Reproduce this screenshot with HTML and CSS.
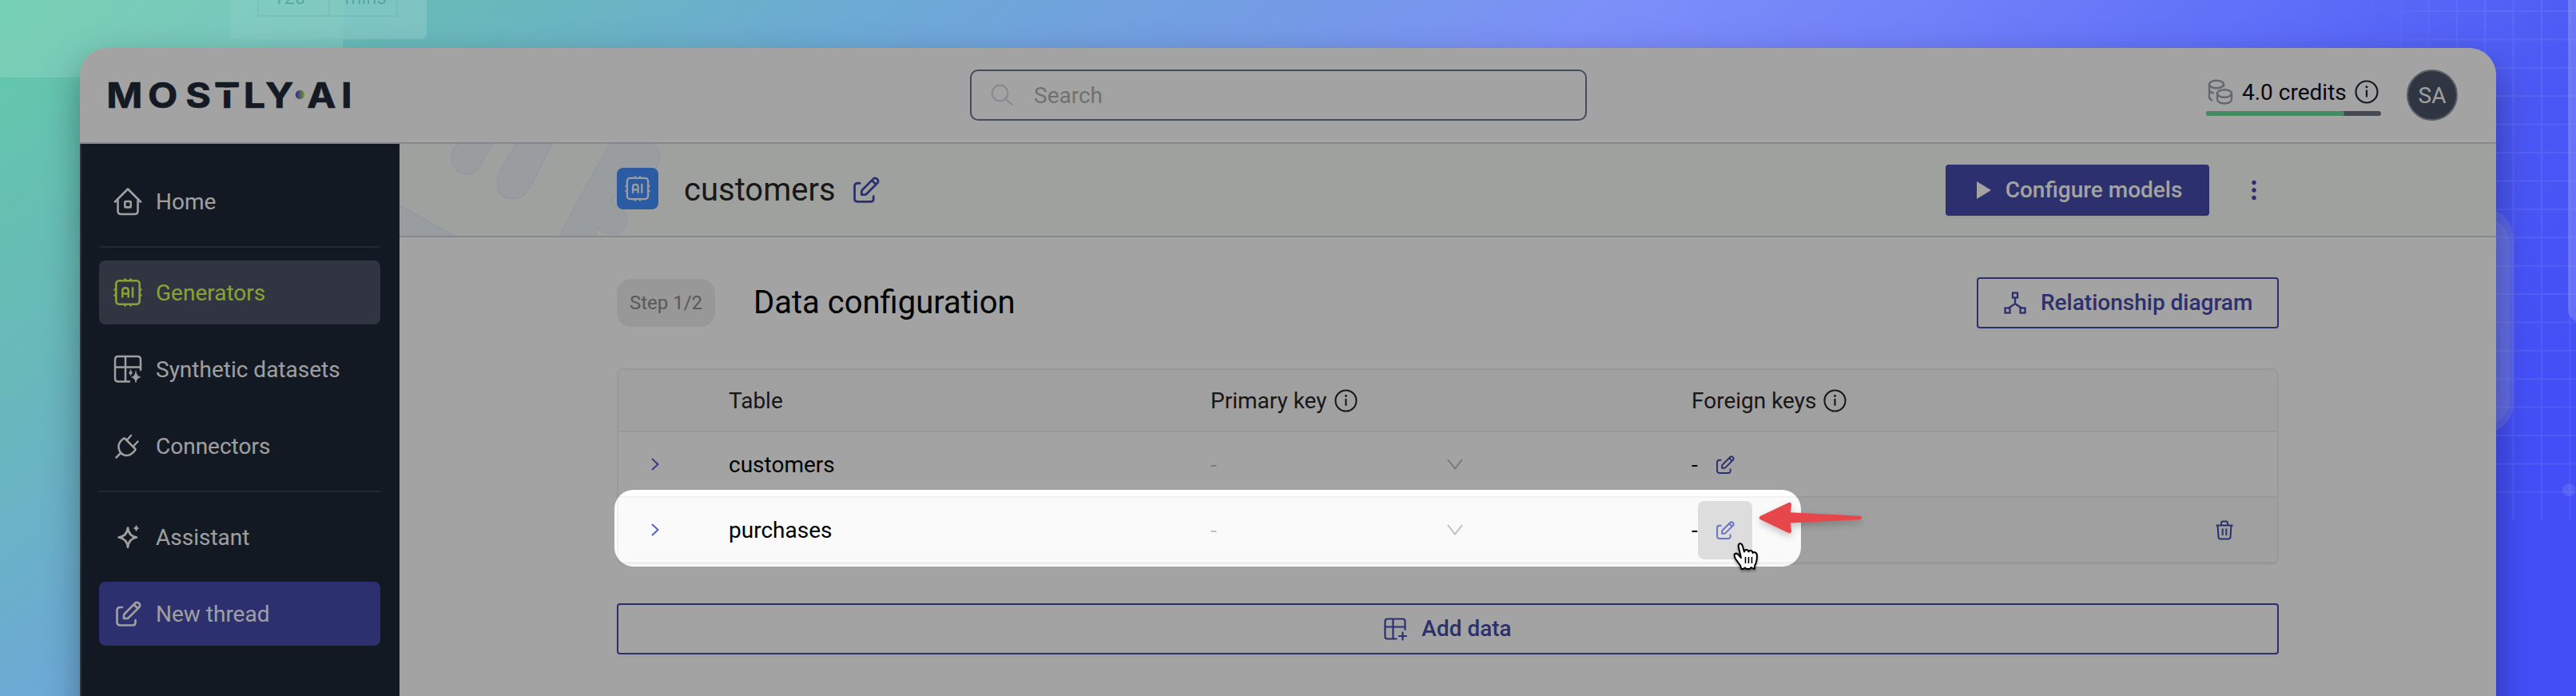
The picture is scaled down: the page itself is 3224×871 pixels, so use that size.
FILE: index.html
```html
<!DOCTYPE html>
<html lang="en">
<head>
<meta charset="utf-8">
<title>MOSTLY AI – Data configuration</title>
<link rel="stylesheet" href="styles.css">
</head>
<body>
<svg class="defs" width="0" height="0" aria-hidden="true">
  <symbol id="i-edit" viewBox="0 0 32 32"><g fill="none" stroke="currentColor" stroke-width="2.7" stroke-linecap="round" stroke-linejoin="round"><path d="M8 8H5.500Q1.500 8 1.500 12V26.500Q1.500 30.500 5.500 30.500H21Q24.500 30.500 24.500 27V24"/><path d="M11 16 24.200 2.800Q26.500 .8 29 3Q31.200 5.500 29.200 7.800L16 21Q15 22 13.500 22H10V18.500Q10 17 11 16ZM22.500 4.500 27.500 9.500"/></g></symbol>
  <symbol id="i-chip" viewBox="0 0 36 36"><g fill="none" stroke="currentColor" stroke-width="2.600" stroke-linecap="round" stroke-linejoin="round"><rect x="3.300" y="3.300" width="29.400" height="29.400" rx="4"/><path d="M14.500 3V1.500M21.500 3V1.500M14.500 33V34.500M21.500 33V34.500M3 14.500H1.500M3 21.500H1.500M33 14.500H34.500M33 21.500H34.500M11.300 23.500V16Q11.300 12.300 15 12.300T18.700 16V23.500M11.300 19.500H18.700M24 12.300V23.500"/></g></symbol>
  <symbol id="i-info" viewBox="0 0 30 30"><circle cx="15" cy="15" r="13.500" fill="none" stroke="currentColor" stroke-width="2.200"/><path d="M15 12.500V21.500" stroke="currentColor" stroke-width="2.200"/><circle cx="15" cy="8.800" r="1.500" fill="currentColor"/></symbol>
  <symbol id="i-right" viewBox="0 0 10 16"><path d="M1 1 8.500 8 1 15" fill="none" stroke="currentColor" stroke-width="2"/></symbol>
  <symbol id="i-down" viewBox="0 0 20 14"><path d="M1 1 10 12.500 19 1" fill="none" stroke="currentColor" stroke-width="2"/></symbol>
</svg>
<div class="stage">
  <svg class="backdrop" width="3224" height="871" viewBox="0 0 3224 871" aria-hidden="true">
    <defs>
      <pattern id="grid" width="35.400" height="35.400" patternUnits="userSpaceOnUse" x="3003" y="13"><path d="M0 1H35.400M1 0V35.400" stroke="#fff" stroke-width="2"/></pattern>
      <linearGradient id="mg"><stop offset="0" stop-color="#000"/><stop offset=".6" stop-color="#fff" /></linearGradient>
      <mask id="gm"><rect x="2940" y="0" width="284" height="650" fill="url(#mg)"/></mask>
    </defs>
    <path d="M0 0H429V97H0Z" fill="#fff" opacity=".13"/>
    <path d="M288 0H534V41Q534 49 526 49H296Q288 49 288 41Z" fill="#fff" opacity=".06"/>
    <path d="M429 0H534V41Q534 49 526 49H429Z" fill="#fff" opacity=".1"/>
    <path d="M323 0V20H497V0M412 0V20" fill="none" stroke="#4a9a9c" stroke-width="1.500" opacity=".22"/>
    <rect x="2940" y="0" width="284" height="650" fill="url(#grid)" opacity=".07" mask="url(#gm)"/>
    <circle cx="3215" cy="613" r="8" fill="#fff" opacity=".1"/>
    <path d="M3214 0H3224V402Q3214 398 3214 386Z" fill="#aab4ff" opacity=".32"/>
    <path d="M3100 260Q3146 260 3146 305V500Q3146 542 3100 542Z" fill="#8f97c8" opacity=".25"/>
    <path d="M3100 268Q3141 275 3141 305V500Q3141 530 3100 536Z" fill="#aab0d8" opacity=".15"/>
  </svg>
  <div class="ghost"><span>120</span><span>mins</span></div>

  <div class="window">
    <header class="topbar">
      <svg class="logo" width="304" height="40" viewBox="0 0 304 40">
        <defs><linearGradient id="dot"><stop offset="0" stop-color="#4a3fe0"/><stop offset="1" stop-color="#b0ee50"/></linearGradient></defs>
        <g transform="scale(1.1 1)"><text class="logo-text" y="36" x="-2.600 44.500 87.600 120.100 153.400 178.300 225.600 264.500">MOSTLYAI</text></g>
        <rect x="134.200" y="7" width="28" height="3.600" fill="#1f2937"/>
        <rect x="132" y="10.600" width="32" height="3.300" fill="#fff"/>
        <circle cx="239.500" cy="19.500" r="5.700" fill="url(#dot)"/>
      </svg>
      <div class="search">
        <svg width="28" height="28" viewBox="0 0 28 28" fill="none" stroke="#d5d7e2" stroke-width="2.200" stroke-linecap="round"><circle cx="11.500" cy="11.500" r="9.800"/><path d="M18.500 18.500 26.500 26"/></svg>
        <span>Search</span>
      </div>
      <div class="account">
        <div class="credits">
          <div class="credits-row">
            <svg width="32" height="32" viewBox="0 0 32 32" fill="none" stroke="#9ca3af" stroke-width="2.400"><ellipse cx="11" cy="6.500" rx="9" ry="4.800"/><path d="M2 6.500V22Q2 25 6 27M2 14Q3 17 8 17.500M20 6.500V10"/><ellipse cx="21" cy="18" rx="9" ry="4.800"/><path d="M12 18V25.500Q13 30.500 21 30.500T30 25.500V18"/></svg>
            <span class="credits-label">4.0 credits</span>
            <svg class="ink" width="30" height="30"><use href="#i-info"/></svg>
          </div>
          <div class="meter"><div class="meter-fill"></div></div>
        </div>
        <div class="avatar">SA</div>
      </div>
    </header>

    <div class="body">
      <nav class="sidebar">
        <a class="item"><svg width="36" height="36" viewBox="0 0 36 36" fill="none" stroke="currentColor" stroke-width="2.600" stroke-linecap="round" stroke-linejoin="round"><path d="M2 18.500 18 2.500 34 18.500M5.500 17V30Q5.500 34 9.500 34H26.500Q30.500 34 30.500 30V17"/><rect x="14.300" y="18" width="7.400" height="7.400" rx="1"/></svg><span>Home</span></a>
        <hr>
        <a class="item active"><svg width="36" height="36"><use href="#i-chip"/></svg><span>Generators</span></a>
        <a class="item"><svg width="36" height="36" viewBox="0 0 36 36" fill="none" stroke="currentColor" stroke-width="2.500" stroke-linecap="round"><path d="M20 33.500H6Q2 33.500 2 29.500V6Q2 2 6 2H30Q34 2 34 6V19M15 2V33M2 15.500H34"/><path d="M28 20.500Q28.800 27 34 28Q28.800 29 28 35Q27.200 29 22.500 28Q27.200 27 28 20.500ZM21.500 18.500Q22 22 24 22.500Q22 23 21.500 26Q21 23 19 22.500Q21 22 21.500 18.500Z" fill="currentColor" stroke-width=".6"/></svg><span>Synthetic datasets</span></a>
        <a class="item"><svg width="36" height="36" viewBox="0 0 36 36" fill="none" stroke="currentColor" stroke-width="2.500" stroke-linecap="round" stroke-linejoin="round"><path d="M14 8.500 27 21.500Q28 22.500 27 23.500Q22 30.500 15 30Q12 29.500 9.500 27Q6 23 6.500 17Q8 12 13 8.500ZM9.500 26.500 3.500 32.500M17 10.500 22 5M25 18.500 30.500 12.500"/></svg><span>Connectors</span></a>
        <hr>
        <a class="item"><svg width="36" height="36" viewBox="0 0 36 36" fill="none" stroke="currentColor" stroke-width="2.700" stroke-linejoin="round"><path d="M18 6.500Q19 17 29 18.500Q19 20 18 31Q17 20 6.500 18.500Q17 17 18 6.500Z"/><path d="M28.500 3.500Q29 6.500 31.500 7Q29 7.500 28.500 10.500Q28 7.500 25.500 7Q28 6.500 28.500 3.500Z" fill="currentColor" stroke-width="1"/></svg><span>Assistant</span></a>
        <a class="item primary"><svg class="pen" width="32" height="32"><use href="#i-edit"/></svg><span>New thread</span></a>
      </nav>

      <main class="main">
        <div class="titlebar">
          <svg class="pattern" width="340" height="115" viewBox="0 0 340 115"><g fill="#eff6fb" stroke="#e6f1f9" stroke-width="2"><path d="M75-2Q64 8 65 21Q70 38 86 38Q97 38 102 24L118-2Z"/><path d="M147-2 124 38Q117 68 142 68.500Q156 68 163 54L192-2Z"/><path d="M-2 76 70 116H-2Z"/><path d="M264-2H314Q328 8 325 22Q320 38 300 50L268 66Q264 72 270 76Q286 84 284 98Q281 112 266 112Q254 111 249 105L243 117H199Z"/></g></svg>
          <div class="titlebar-inner">
            <div class="badge"><svg width="32" height="32"><use href="#i-chip"/></svg></div>
            <h1>customers</h1>
            <svg class="accent" width="33" height="33"><use href="#i-edit"/></svg>
            <button class="btn solid"><svg width="18" height="22" viewBox="0 0 18 22"><path d="M0 0 18 11 0 22Z" fill="currentColor"/></svg><span>Configure models</span></button>
            <svg class="accent dots" width="8" height="26" viewBox="0 0 8 26" fill="currentColor"><circle cx="4" cy="3.500" r="2.700"/><circle cx="4" cy="13" r="2.700"/><circle cx="4" cy="22.500" r="2.700"/></svg>
          </div>
        </div>

        <div class="content">
          <div class="step">
            <span class="pill">Step 1/2</span>
            <h2>Data configuration</h2>
            <button class="btn outline rel"><svg width="28" height="28" viewBox="0 0 28 28" fill="none" stroke="currentColor" stroke-width="2.300"><rect x="11" y="1.500" width="6" height="6"/><rect x="1.500" y="20.500" width="6" height="6"/><rect x="20.500" y="20.500" width="6" height="6"/><path d="M14 7.500V15L6 20.500M14 15 22 20.500"/></svg><span>Relationship diagram</span></button>
          </div>

          <div class="table">
            <div class="row head">
              <span></span><span>Table</span>
              <span class="label">Primary key<svg width="29" height="29"><use href="#i-info"/></svg></span>
              <span class="label">Foreign keys<svg width="29" height="29"><use href="#i-info"/></svg></span>
            </div>
            <div class="row">
              <span class="expand"><svg width="10" height="16"><use href="#i-right"/></svg></span>
              <span>customers</span>
              <span class="select"><span>-</span><svg width="20" height="14"><use href="#i-down"/></svg></span>
              <span class="keys"><span>-</span><i class="edit"><svg width="23" height="23"><use href="#i-edit"/></svg></i></span>
            </div>
            <div class="row hovered">
              <span class="expand"><svg width="10" height="16"><use href="#i-right"/></svg></span>
              <span>purchases</span>
              <span class="select"><span>-</span><svg width="20" height="14"><use href="#i-down"/></svg></span>
              <span class="keys"><span>-</span><i class="edit on"><svg width="23" height="23"><use href="#i-edit"/></svg></i>
                <svg class="accent trash" width="24" height="25" viewBox="0 0 24 25" fill="none" stroke="currentColor" stroke-width="2"><path d="M1.500 6.500H22.500M8 6V3.500Q8 1.500 10 1.500H14Q16 1.500 16 3.500V6M3.500 6.500 4.500 21Q4.700 23.500 7 23.500H17Q19.300 23.500 19.500 21L20.500 6.500M9.700 10.500V19M14.300 10.500V19"/></svg></span>
            </div>
          </div>

          <button class="btn outline add"><svg width="29" height="29" viewBox="0 0 29 29" fill="none" stroke="currentColor" stroke-width="2.200" stroke-linecap="round"><path d="M15.500 26.500H4.500Q1.500 26.500 1.500 23.500V4.500Q1.500 1.500 4.500 1.500H23.500Q26.500 1.500 26.500 4.500V15M11.500 1.500V26.500M1.500 11.500H26.500M23.500 18.500V27.500M19 23H28"/></svg><span>Add data</span></button>
        </div>
      </main>
    </div>
    <div class="spotlight"></div>
  </div>

  <svg class="arrow" width="132" height="50" viewBox="0 0 132 50"><path d="M1.800 22 37 5.200Q41.200 3.500 41 7.500L40 17.200 127 21.700Q129 21.900 129 24T127 26.300L40 30.500 41 40.500Q41.200 44.500 37 42.800L1.800 26Q0 24 1.800 22Z" fill="#e7474a"/></svg>
  <svg class="cursor" width="34" height="38" viewBox="0 0 34 38"><path d="M10.500 34 9 29.500 3.500 22Q1 17.500 1.800 15.500Q4.300 13.500 6.500 16L10 20 6.800 6Q6.500 2.200 9 2.200Q11 2.200 11.800 5L14 12.500Q14.500 9.800 17 10Q19 10.300 19.500 12.500Q20.300 10.500 22.500 11Q24.500 11.700 24.800 14Q26 12.500 28 13.500Q30 14.500 30 18Q30 22.500 28.800 26L27 30.500V34Q24 33 22.500 32L21 34H17L15 32.500Q13 34.500 10.500 34Z" fill="#fff" stroke="#000" stroke-width="2" stroke-linejoin="round"/><path d="M15.500 19V27M19.500 19V27M23.500 19V27" stroke="#000" stroke-width="1.600"/></svg>
</div>
</body>
</html>
```
FILE: styles.css
```css
* { box-sizing: border-box; }
body { margin: 0; font-family: Roboto, "Liberation Sans", sans-serif; font-size: 28px; color: #000; }
h1, h2 { margin: 0; font-weight: 400; font-size: 40px; line-height: 48px; }
svg { display: block; flex: none; }
use { width: 100%; height: 100%; }
.defs { position: absolute; }
.stage {
  position: relative; width: 3224px; height: 871px; overflow: hidden; padding: 60px 100px 0;
  background: linear-gradient(141deg, #62caa8 0%, #69b8bb 14.3%, #6caad4 25.5%, #749be6 38%, #7c8ff8 47%, #7080f8 57%, #5e6ef8 67%, #4b58f4 77%, #434ef6 89%, #434ef7 100%);
}
.backdrop { position: absolute; left: 0; top: 0; }
.ghost { position: absolute; left: 342px; top: -19px; display: flex; gap: 49px; color: #4f9f9f; font-size: 24px; line-height: 32px; opacity: .8; }

.window {
  position: relative; width: 3024px; height: 900px; overflow: hidden; background: #fff;
  border-radius: 34px 34px 0 0; display: flex; flex-direction: column;
  box-shadow: 0 18px 44px rgba(0, 0, 0, .34);
}
.topbar { height: 120px; flex: none; display: flex; align-items: center; padding: 0 48px 0 36px; border-bottom: 2px solid #d1d5db; }
.logo { overflow: visible; }
.logo-text { font-family: Inter, sans-serif; font-weight: 700; font-size: 44px; fill: #1f2937; stroke: #1f2937; stroke-width: .7px; }
.search { margin-left: 774px; width: 772px; height: 64px; border: 2px solid #6c7490; border-radius: 10px; display: flex; align-items: center; gap: 26px; padding-left: 24px; color: #b1b1b1; }
.account { margin-left: auto; display: flex; align-items: center; gap: 32px; }
.credits { width: 219px; padding-top: 4px; }
.credits-row { display: flex; align-items: center; padding-left: 2px; height: 36px; }
.credits-label { margin: 0 10px 0 11px; color: #0b0d22; }
.ink { color: #1f2937; }
.meter { height: 6px; margin-top: 6px; border-radius: 3px; background: #6b7283; overflow: hidden; }
.meter-fill { width: 173px; height: 6px; border-radius: 3px; background: #6edb9c; }
.avatar { width: 64px; height: 64px; border-radius: 50%; background: #4a5467; border: 2px solid #8c94a4; color: #f9f9f9; display: flex; align-items: center; justify-content: center; }

.body { flex: 1; display: flex; }
.sidebar { width: 400px; flex: none; padding: 32px 24px 0 22px; border-left: 2px solid #4a505c; background: #1e2836; color: #f9f9f9; display: flex; flex-direction: column; gap: 16px; }
.sidebar hr { margin: 0; width: 100%; height: 2px; border: 0; background: #353d50; }
.item { height: 80px; border-radius: 8px; display: flex; align-items: center; gap: 17px; padding-left: 18px; flex: none; }
.item .pen { margin: 0 0 0 2px; width: 34px; }
.active { background: #4b5466; color: #d8fe50; }
.primary { background: #454bad; }

.main { flex: 1; }
.titlebar { position: relative; height: 117px; background: #f9fcf9; border-bottom: 2px solid #d1d5db; }
.pattern { position: absolute; left: 0; top: 0; }
.titlebar-inner { position: relative; height: 115px; padding-left: 272px; display: flex; align-items: center; color: #454bad; }
.badge { width: 52px; height: 52px; margin-bottom: 4px; border-radius: 8px; background: #448ffd; color: #f4f6fa; display: flex; align-items: center; justify-content: center; }
.titlebar h1 { color: #262626; margin: 0 22px 0 32px; }
.accent { color: #454bad; }
.dots { margin-left: 52px; }
.btn { font: 500 28px/60px Roboto, sans-serif; height: 64px; border: 2px solid #454bad; border-radius: 4px; display: flex; align-items: center; padding: 0; box-shadow: 0 4px 0 rgba(0, 0, 0, .02); }
.solid { width: 330px; margin: 1px 0 0 1334px; background: #454bad; color: #fff; gap: 18px; padding-left: 37px; }
.outline { background: #fff; color: #454bad; }

.content { width: 2080px; margin: 0 auto; }
.step { height: 64px; margin: 50px 0; display: flex; align-items: center; }
.pill { width: 123px; height: 60px; border-radius: 18px; background: #eee; color: #8c8c8c; font-size: 24px; display: flex; align-items: center; justify-content: center; }
.step h2 { margin-left: 48px; }
.rel { width: 378px; margin-left: auto; padding-left: 32px; gap: 18px; }

.table { border: 2px solid #f0f0f0; border-radius: 8px; overflow: hidden; }
.row { height: 82px; border-bottom: 2px solid #f0f0f0; display: grid; grid-template-columns: 138px 603px 602px 1fr; align-items: center; }
.head { height: 78px; background: #fafafa; color: #262626; }
.label { display: flex; align-items: center; gap: 9px; }
.hovered { background: #fafafa; }
.expand { padding-left: 41px; color: #5560c4; }
.select { display: flex; align-items: center; color: #bfbfbf; }
.select svg { margin-left: 288px; }
.keys { display: flex; align-items: center; }
.edit { width: 68px; height: 73px; border-radius: 8px; margin-left: 0; color: #454bad; display: flex; align-items: center; justify-content: center; }
.edit svg { margin-left: 1px; }
.on { background: #ddd; color: #6872c6; }
.trash { margin-left: 579px; }
.add { width: 100%; margin-top: 48px; gap: 18px; justify-content: center; }

.spotlight { position: absolute; left: 669px; top: 553.4px; width: 1484.5px; height: 95.200px; border-radius: 24px; box-shadow: 0 0 0 4000px rgba(0, 0, 0, .36); }
.arrow { position: absolute; left: 2201px; top: 624px; filter: drop-shadow(0 4px 4px rgba(0, 0, 0, .22)); }
.cursor { position: absolute; left: 2169px; top: 678px; filter: drop-shadow(0 2px 1.500px rgba(0, 0, 0, .4)); }
```
